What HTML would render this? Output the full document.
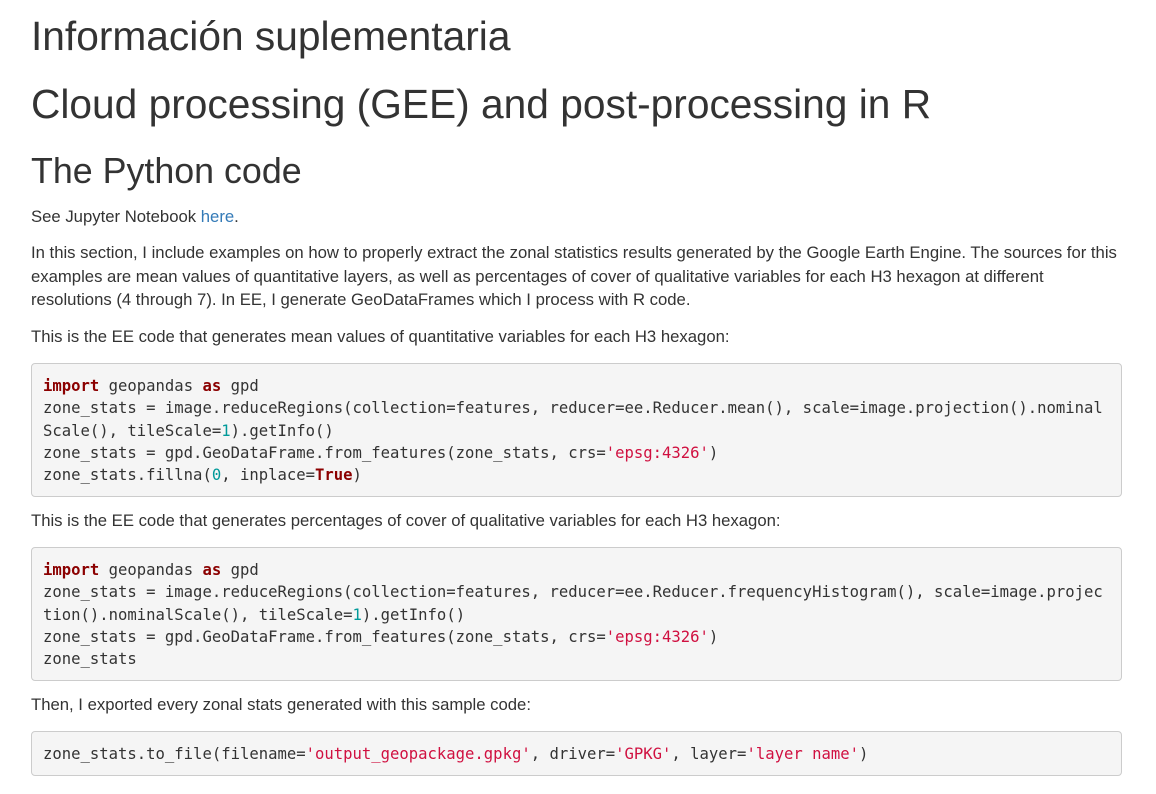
<!DOCTYPE html>
<html><head><meta charset="utf-8"><style>
body{margin:0;background:#fff;color:#333;font-family:"Liberation Sans",sans-serif;font-size:16.7px;line-height:23.5px;}
h1,h2{font-weight:500;margin:0;position:absolute;left:31px;white-space:nowrap;color:#333}
h1{font-size:40.7px;line-height:44px}
h2{font-size:35.8px;line-height:40px}
p{margin:0;position:absolute;left:31px;width:1092px}
a{color:#337ab7;text-decoration:none}
pre{position:absolute;left:31px;width:1066px;margin:0;padding:11px 12px 10px 11px;background:#f5f5f5;border:1px solid #ccc;border-radius:4px;font-family:"DejaVu Sans Mono",monospace;font-size:15.58px;line-height:22.3px;color:#333;white-space:pre}
.k{font-weight:bold;color:#8b0000}
.s{color:#d01040}
.n{color:#099}
</style></head><body>
<h1 style="top:14px">Información suplementaria</h1>
<h1 style="top:82px">Cloud processing (GEE) and post-processing in R</h1>
<h2 style="top:151px">The Python code</h2>
<p style="top:205px">See Jupyter Notebook <a>here</a>.</p>
<p style="top:241px">In this section, I include examples on how to properly extract the zonal statistics results generated by the Google Earth Engine. The sources for this examples are mean values of quantitative layers, as well as percentages of cover of qualitative variables for each H3 hexagon at different resolutions (4 through 7). In EE, I generate GeoDataFrames which I process with R code.</p>
<p style="top:325px">This is the EE code that generates mean values of quantitative variables for each H3 hexagon:</p>
<pre style="top:363px"><span class="k">import</span> geopandas <span class="k">as</span> gpd
zone_stats = image.reduceRegions(collection=features, reducer=ee.Reducer.mean(), scale=image.projection().nominal
Scale(), tileScale=<span class="n">1</span>).getInfo()
zone_stats = gpd.GeoDataFrame.from_features(zone_stats, crs=<span class="s">'epsg:4326'</span>)
zone_stats.fillna(<span class="n">0</span>, inplace=<span class="k">True</span>)</pre>
<p style="top:509px">This is the EE code that generates percentages of cover of qualitative variables for each H3 hexagon:</p>
<pre style="top:547px"><span class="k">import</span> geopandas <span class="k">as</span> gpd
zone_stats = image.reduceRegions(collection=features, reducer=ee.Reducer.frequencyHistogram(), scale=image.projec
tion().nominalScale(), tileScale=<span class="n">1</span>).getInfo()
zone_stats = gpd.GeoDataFrame.from_features(zone_stats, crs=<span class="s">'epsg:4326'</span>)
zone_stats</pre>
<p style="top:693px">Then, I exported every zonal stats generated with this sample code:</p>
<pre style="top:731px">zone_stats.to_file(filename=<span class="s">'output_geopackage.gpkg'</span>, driver=<span class="s">'GPKG'</span>, layer=<span class="s">'layer name'</span>)</pre>
</body></html>
